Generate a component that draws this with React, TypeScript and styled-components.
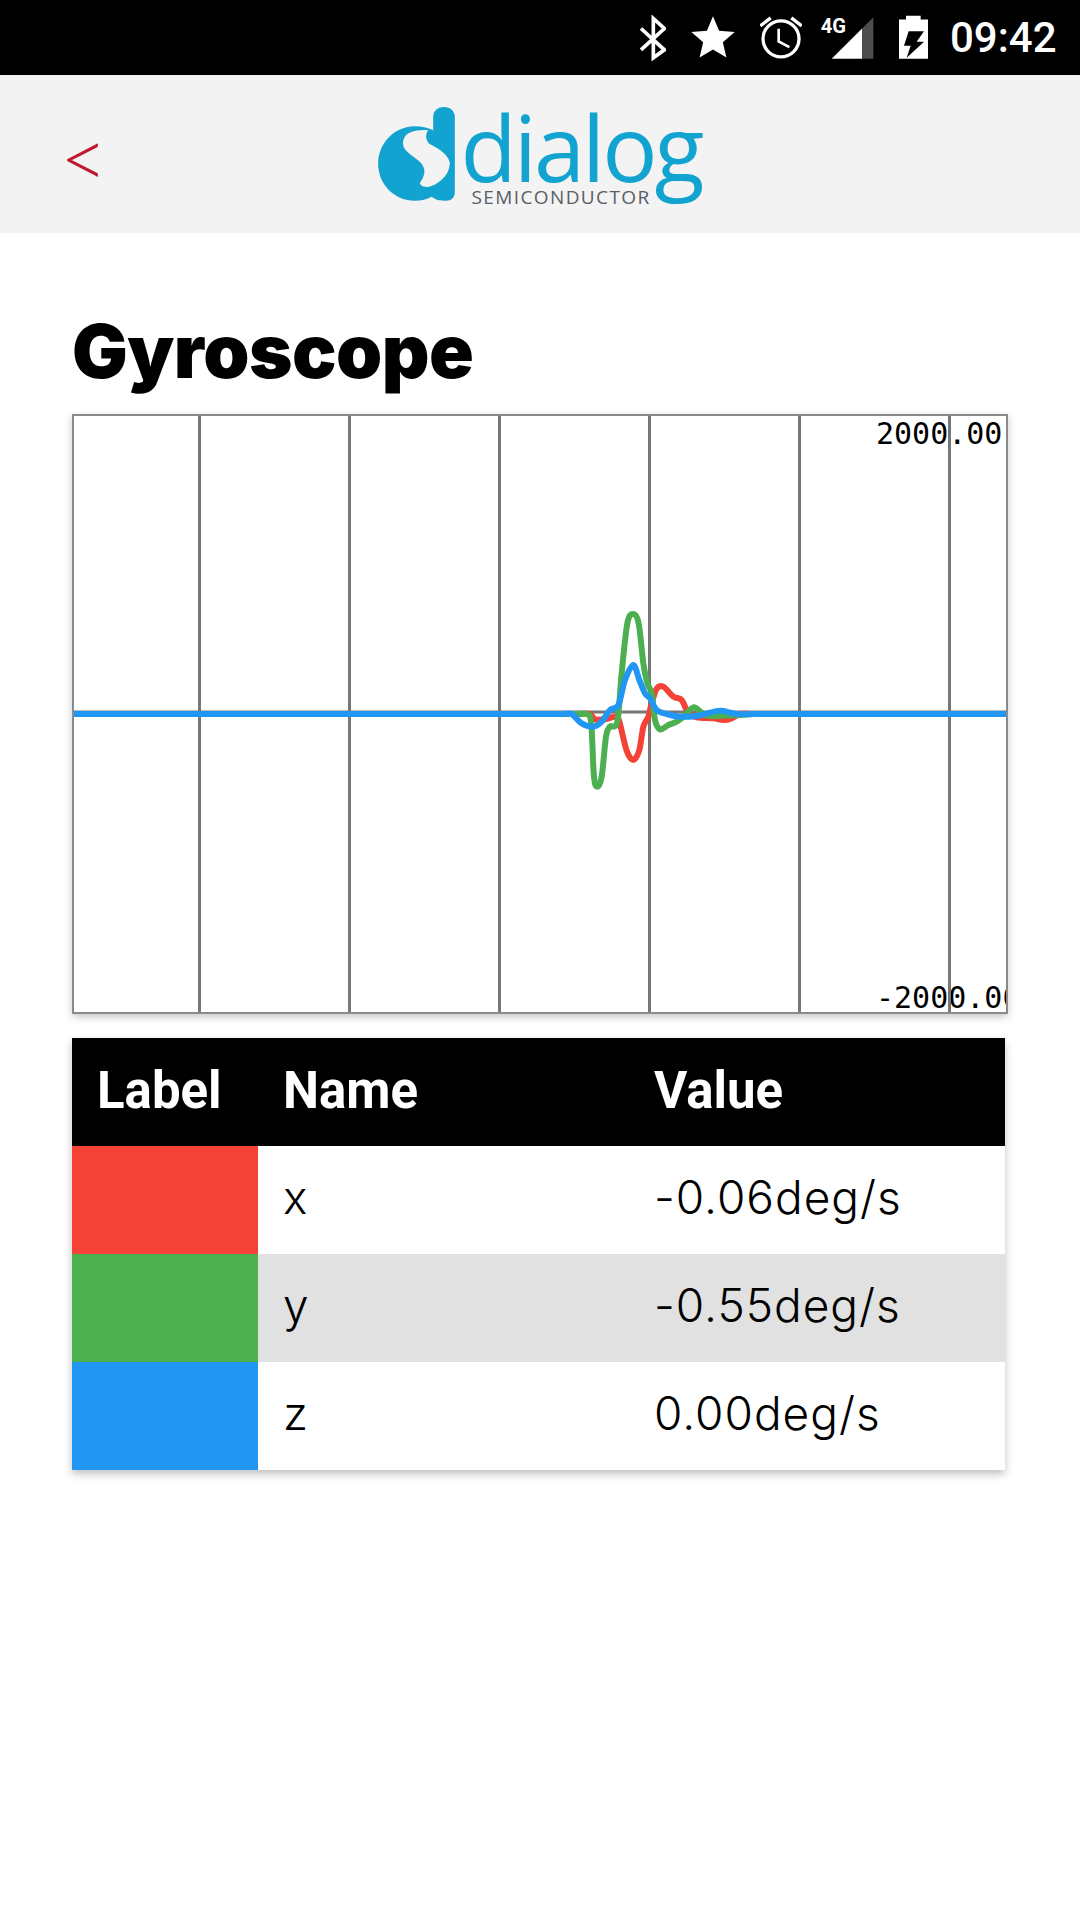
import React from 'react';
import styled, { createGlobalStyle } from 'styled-components';
import { MdStar } from 'react-icons/md';

const GlobalStyle = createGlobalStyle`
  html, body { margin: 0; padding: 0; background: #fff; }
  body { width: 1080px; height: 1920px; overflow: hidden; font-family: "Inter", sans-serif; }
`;

const StatusBar = styled.div`
  height: 75px;
  background: #000;
  color: #fff;
  display: flex;
  align-items: center;
  justify-content: flex-end;
  padding-right: 24px;
  box-sizing: border-box;
`;

const StatusIcon = styled.span<{ $gap: number; $size?: number }>`
  display: flex;
  margin-right: ${(p) => p.$gap}px;
  font-size: ${(p) => p.$size ?? 46}px;
`;

const Clock = styled.span`
  font-family: "Roboto", sans-serif;
  font-weight: 500;
  font-size: 42px;
  width: 106px;
  white-space: nowrap;
`;

const Header = styled.header`
  height: 158px;
  background: #f3f3f3;
  display: grid;
  grid-template-columns: 1fr auto 1fr;
  align-items: center;
`;

const BackLink = styled.a`
  font-family: "Lato", sans-serif;
  font-weight: 300;
  font-size: 82px;
  line-height: 80px;
  color: #bd1a2e;
  padding: 4px 0 0 60px;
`;

const Logo = styled.div`
  display: flex;
  align-items: flex-start;
  gap: 5px;
  height: 95px;
`;

const LogoText = styled.div`
  display: flex;
  flex-direction: column;
`;

const LogoWord = styled.span`
  font-family: "Open Sans", sans-serif;
  font-weight: 400;
  font-size: 92px;
  line-height: 92px;
  letter-spacing: -3px;
  margin-top: -6px;
  color: #12a3d0;
`;

const LogoSub = styled.span`
  font-family: "Open Sans", sans-serif;
  font-size: 19px;
  line-height: 20px;
  letter-spacing: 1.4px;
  color: #5a5e66;
  margin: -6px 0 0 11px;
`;

const Main = styled.main`
  padding: 76px 72px 0;
`;

const Title = styled.h1`
  margin: 0 0 20px;
  font-family: "Inter", sans-serif;
  font-weight: 900;
  font-size: 74px;
  line-height: 85px;
  letter-spacing: -0.5px;
  color: #000;
`;

const ChartCard = styled.div`
  width: 936px;
  height: 600px;
  box-sizing: border-box;
  border: 2px solid #8a8a8a;
  overflow: hidden;
  box-shadow: 0 3px 8px rgba(0, 0, 0, 0.22);
`;

const ChartLabel = styled.text`
  font-family: "DejaVu Sans Mono", monospace;
  font-size: 30px;
  fill: #000;
`;

const DataTable = styled.table`
  width: 933px;
  margin-top: 24px;
  border-collapse: collapse;
  table-layout: fixed;
  box-shadow: 0 4px 8px rgba(0, 0, 0, 0.25);
`;

const HeadCell = styled.th`
  height: 108px;
  padding: 0 0 3px 25px;
  box-sizing: border-box;
  background: #000;
  color: #fff;
  text-align: left;
  font-family: "Roboto", sans-serif;
  font-weight: 700;
  font-size: 51px;
`;

const Row = styled.tr<{ $shaded?: boolean }>`
  height: 108px;
  background: ${(p) => (p.$shaded ? '#e1e1e1' : '#fff')};
`;

const Swatch = styled.td<{ $color: string }>`
  padding: 0;
  background: ${(p) => p.$color};
`;

const Cell = styled.td`
  padding: 0 0 6px 25px;
  box-sizing: border-box;
  font-family: "Inter", sans-serif;
  font-weight: 300;
  font-size: 46px;
  letter-spacing: 1px;
  color: #000;
`;

const RED = '#f44336';
const GREEN = '#4caf50';
const BLUE = '#2196f3';

type Pt = [number, number];

// traced from the reference, 3x units around (540,590) on the page
const redPts: Pt[] = [[-1500,372],[60,372],[110,372],[150,372],[165,388],[195,388],[230,380],[240,402],[260,482],[280,510],[298,480],[310,410],[325,380],[335,340],[350,296],[370,290],[400,320],[425,330],[445,370],[470,382],[520,385],[550,390],[575,385],[600,372],[640,372],[700,372],[1500,372]];
const greenPts: Pt[] = [[-1500,372],[60,372],[90,372],[120,372],[148,375],[155,420],[162,560],[172,590],[185,560],[198,440],[210,410],[232,395],[245,250],[262,100],[280,72],[296,100],[310,220],[322,280],[335,310],[345,390],[360,418],[385,405],[410,395],[430,380],[460,352],[485,368],[510,378],[600,375],[640,372],[700,372],[1500,372]];
const bluePts: Pt[] = [[-1500,372],[40,372],[70,372],[95,372],[125,400],[160,410],[185,395],[210,360],[235,345],[255,270],[280,225],[298,270],[315,310],[330,325],[350,360],[380,372],[420,380],[470,378],[510,368],[545,362],[590,372],[640,372],[700,372],[1500,372]];

// catmull-rom through the traced points, moved into chart coordinates
const toPath = (pts: Pt[]) => {
  const p = pts.map(([x, y]): Pt => [540 + x / 3 - 74, 590 + y / 3 - 416]);
  let d = `M${p[0][0]} ${p[0][1]}`;
  for (let i = 0; i < p.length - 1; i++) {
    const a = p[Math.max(i - 1, 0)];
    const b = p[i];
    const c = p[i + 1];
    const e = p[Math.min(i + 2, p.length - 1)];
    const dx = c[0] - b[0];
    const t1 = Math.min((c[0] - a[0]) / 6, dx / 2);
    const t2 = Math.min((e[0] - b[0]) / 6, dx / 2);
    const s1 = (c[1] - a[1]) / (c[0] - a[0] || 1);
    const s2 = (e[1] - b[1]) / (e[0] - b[0] || 1);
    d += ` C${b[0] + t1} ${b[1] + s1 * t1} ${c[0] - t2} ${c[1] - s2 * t2} ${c[0]} ${c[1]}`;
  }
  return d;
};

const gridX = [125.5, 275.5, 425.5, 575.5, 725.5, 875.5];

const Chart = () => (
  <ChartCard>
    <svg width="932" height="596" style={{ display: 'block' }}>
      <ChartLabel x="802" y="28">2000.00</ChartLabel>
      <ChartLabel x="802" y="592">-2000.00</ChartLabel>
      {gridX.map((x) => (
        <line key={x} x1={x} x2={x} y1="0" y2="596" stroke="#777" strokeWidth="3" />
      ))}
      <line x1="0" x2="932" y1="296" y2="296" stroke="#777" strokeWidth="3" />
      <path d={toPath(redPts)} fill="none" stroke={RED} strokeWidth="6" />
      <path d={toPath(greenPts)} fill="none" stroke={GREEN} strokeWidth="6" />
      <path d={toPath(bluePts)} fill="none" stroke={BLUE} strokeWidth="6" />
    </svg>
  </ChartCard>
);

const LogoMark = () => (
  <svg width="77" height="95" viewBox="115 55 230 285" style={{ display: 'block' }}>
    <path
      fill="#12a3d0"
      d="M280 85 C280 65 295 55 313 55 C331 55 345 67 345 85 L345 310 C345 328 332 338 315 336 L292 334 L275 324 C262 332 245 336 225 336 C165 336 115 288 115 225 C115 163 165 113 225 113 C245 113 263 117 280 125 Z"
    />
    <path
      fill="#f3f3f3"
      d="M192 150 C200 130 225 122 265 124 C258 135 255 150 268 165 C290 178 322 190 330 222 C330 255 305 280 275 292 C258 298 243 294 240 284 C248 270 258 255 252 238 C245 215 215 205 198 185 C190 175 187 162 192 150 Z"
    />
  </svg>
);

// status icons are drawn in 3x units of the reference, all on the same vertical band
const BluetoothIcon = () => (
  <svg width="26" height="46" viewBox="120 43.5 78 138" style={{ display: 'block' }}>
    <path d="M123 84 L193 148 L160 172 L160 54 L193 84 L123 148" fill="none" stroke="#fff" strokeWidth="11" />
  </svg>
);

const AlarmIcon = () => (
  <svg width="42" height="46" viewBox="480 43.5 126 138" style={{ display: 'block' }}>
    <circle cx="543" cy="115" r="54" fill="none" stroke="#fff" strokeWidth="10" />
    <path d="M536 85 V123 L568 140" fill="none" stroke="#fff" strokeWidth="8" />
    <path d="M481 76 L512 52 M605 76 L574 52" fill="none" stroke="#fff" strokeWidth="10" />
  </svg>
);

const SignalIcon = () => (
  <svg width="54" height="46" viewBox="660 43.5 162 138" style={{ display: 'block' }}>
    <polygon points="695,175 787,83 787,175" fill="#fff" />
    <polygon points="787,83 820,50 820,175 787,175" fill="#4d4d4d" />
    <text x="662" y="96" fontFamily="Roboto" fontWeight="700" fontSize="62" fill="#fff" textLength="76" lengthAdjust="spacingAndGlyphs">4G</text>
  </svg>
);

const BatteryIcon = () => (
  <svg width="29" height="46" viewBox="897 43.5 87 138" style={{ display: 'block' }}>
    <path
      fill="#fff"
      fillRule="evenodd"
      d="M918 46 H962 V57 H984 V175 H897 V57 H918 Z M926 92 L912 136 H932 L920 172 L972 124 H950 L972 92 Z"
    />
  </svg>
);

const rows = [
  { color: RED, name: 'x', value: '-0.06deg/s' },
  { color: GREEN, name: 'y', value: '-0.55deg/s', shaded: true },
  { color: BLUE, name: 'z', value: '0.00deg/s' },
];

export default function App() {
  return (
    <>
      <GlobalStyle />
      <StatusBar>
        <StatusIcon $gap={21}><BluetoothIcon /></StatusIcon>
        <StatusIcon $gap={21} $size={52}><MdStar /></StatusIcon>
        <StatusIcon $gap={18}><AlarmIcon /></StatusIcon>
        <StatusIcon $gap={25}><SignalIcon /></StatusIcon>
        <StatusIcon $gap={22}><BatteryIcon /></StatusIcon>
        <Clock>09:42</Clock>
      </StatusBar>
      <Header>
        <BackLink>&lt;</BackLink>
        <Logo>
          <LogoMark />
          <LogoText>
            <LogoWord>dialog</LogoWord>
            <LogoSub>SEMICONDUCTOR</LogoSub>
          </LogoText>
        </Logo>
      </Header>
      <Main>
        <Title>Gyroscope</Title>
        <Chart />
        <DataTable>
          <colgroup>
            <col width="186" />
            <col width="371" />
            <col />
          </colgroup>
          <thead>
            <tr>
              <HeadCell>Label</HeadCell>
              <HeadCell>Name</HeadCell>
              <HeadCell>Value</HeadCell>
            </tr>
          </thead>
          <tbody>
            {rows.map((r) => (
              <Row key={r.name} $shaded={r.shaded}>
                <Swatch $color={r.color} />
                <Cell>{r.name}</Cell>
                <Cell>{r.value}</Cell>
              </Row>
            ))}
          </tbody>
        </DataTable>
      </Main>
    </>
  );
}
